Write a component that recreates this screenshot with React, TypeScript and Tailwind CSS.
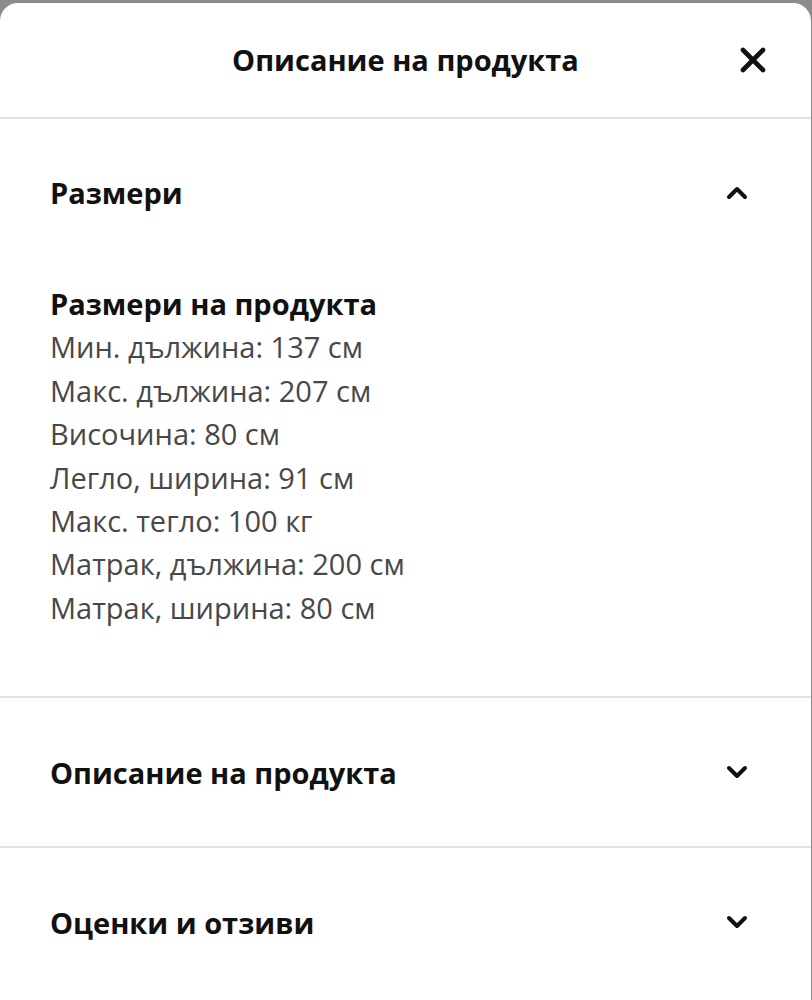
import React from 'react'
import { X, ChevronUp, ChevronDown } from 'lucide-react'

const dimensions = [
  'Мин. дължина: 137 см',
  'Макс. дължина: 207 см',
  'Височина: 80 см',
  'Легло, ширина: 91 см',
  'Макс. тегло: 100 кг',
  'Матрак, дължина: 200 см',
  'Матрак, ширина: 80 см'
]

interface ISectionProps {
  title: string
  open?: boolean
  last?: boolean
  children?: React.ReactNode
}

const Section = ({ title, open = false, last = false, children }: ISectionProps) => (
  <section className={last ? '' : 'border-b-2 border-[#e2e2e2]'}>
    <button className="w-full h-[148px] flex items-center justify-between pl-[50px] pr-[58px] text-left">
      <span className="text-[29px] font-bold text-[#111111]">{title}</span>
      {open
        ? <ChevronUp size={32} strokeWidth={3} className="text-[#111111]" />
        : <ChevronDown size={32} strokeWidth={3} className="text-[#111111]" />}
    </button>
    {open && children}
  </section>
)

export default function App () {
  return (
    <div className="bg-[#8c8c8c] pt-[3px] pr-[1px] min-h-[1000px]" style={{ fontFamily: '"Open Sans", "Noto Sans", sans-serif' }}>
      <div className="bg-white rounded-t-[18px] min-h-[997px]">
        <header className="h-[116px] relative flex items-center justify-center border-b-2 border-[#e2e2e2]">
          <h1 className="text-[29px] font-bold text-[#111111]">Описание на продукта</h1>
          <button className="absolute right-[38px] top-1/2 -translate-y-1/2">
            <X size={40} strokeWidth={2.8} className="text-[#111111]" />
          </button>
        </header>

        <Section title="Размери" open>
          <div className="pl-[50px] pt-[15px] pb-[67px] text-[29px] leading-[43.4px]">
            <h3 className="font-bold text-[#111111]">Размери на продукта</h3>
            {dimensions.map(line => (
              <p key={line} className="text-[#484848]">{line}</p>
            ))}
          </div>
        </Section>

        <Section title="Описание на продукта" />
        <Section title="Оценки и отзиви" last />
      </div>
    </div>
  )
}
